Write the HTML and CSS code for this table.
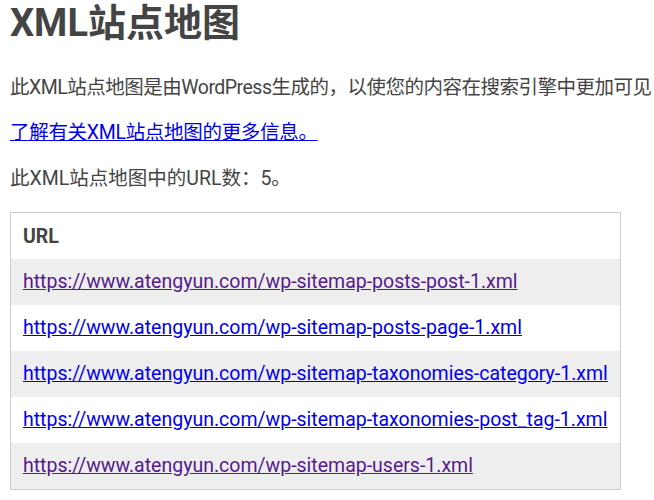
FILE: index.html
```html
<!DOCTYPE html>
<html lang="zh-CN">
<head>
<meta charset="utf-8">
<title>XML站点地图</title>
<link rel="stylesheet" href="styles.css">
</head>
<body>
<div class="sitemap">
  <div class="header">
    <h1 class="title">XML站点地图</h1>
    <p class="desc intro">此XML站点地图是由WordPress生成的，以使您的内容在搜索引擎中更加可见</p>
    <p class="desc"><a class="link" href="#">了解有关XML站点地图的更多信息。</a></p>
  </div>
  <div class="content">
    <p class="count">此XML站点地图中的URL数：5。</p>
    <table class="table">
      <thead>
        <tr><th class="th">URL</th></tr>
      </thead>
      <tbody>
        <tr class="odd"><td class="td"><a class="link visited" href="#">https://www.atengyun.com/wp-sitemap-posts-post-1.xml</a></td></tr>
        <tr><td class="td"><a class="link" href="#">https://www.atengyun.com/wp-sitemap-posts-page-1.xml</a></td></tr>
        <tr class="odd"><td class="td"><a class="link" href="#">https://www.atengyun.com/wp-sitemap-taxonomies-category-1.xml</a></td></tr>
        <tr><td class="td"><a class="link" href="#">https://www.atengyun.com/wp-sitemap-taxonomies-post_tag-1.xml</a></td></tr>
        <tr class="odd"><td class="td"><a class="link visited" href="#">https://www.atengyun.com/wp-sitemap-users-1.xml</a></td></tr>
      </tbody>
    </table>
  </div>
</div>
</body>
</html>
```
FILE: styles.css
```css
html, body {
  margin: 0;
  padding: 0;
  background: #fff;
}
body {
  font-family: Roboto, "Noto Sans CJK SC", sans-serif;
  color: #444;
  font-size: 19.5px;
  overflow: hidden;
}
.sitemap {
  padding: 0 0 0 10px;
}
.title {
  font-size: 38px;
  font-weight: bold;
  line-height: 44px;
  margin: 0;
  padding-top: 1px;
  white-space: nowrap;
}
.desc, .count {
  margin: 0;
  white-space: nowrap;
  line-height: 24px;
}
.desc { letter-spacing: -0.3px; }
.desc.intro { letter-spacing: -0.5px; }
.header .desc:nth-of-type(1) { margin-top: 31px; }
.header .desc:nth-of-type(2) { margin-top: 21px; }
.count { margin-top: 22px; margin-bottom: 21px; }
.link { color: #0000ee; }
.link.visited { color: #551a8b; }
.table {
  width: 611px;
  border: 1px solid #ccc;
  border-collapse: collapse;
}
.th {
  text-align: left;
  padding: 12px 12px 10px;
  line-height: 24px;
  font-weight: bold;
}
.td {
  padding: 11px 12px;
  line-height: 24px;
  white-space: nowrap;
}
.odd .td { background: #eee; }
```
